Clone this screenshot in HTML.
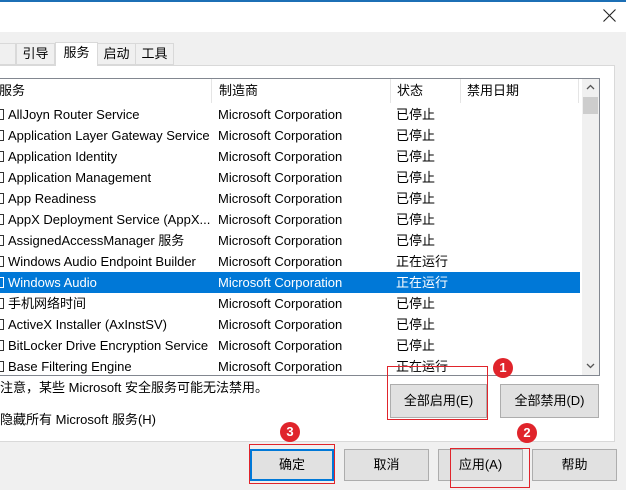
<!DOCTYPE html>
<html><head><meta charset="utf-8"><style>
*{margin:0;padding:0;box-sizing:border-box}
html,body{width:626px;height:490px;overflow:hidden}
body{background:#f0f0f0;position:relative;font-family:"Liberation Sans","Noto Sans CJK SC",sans-serif;font-size:13px;color:#000}
.a{position:absolute;white-space:nowrap}
.row{position:absolute;left:0;width:580px;height:21px;line-height:21px;white-space:nowrap}
.row span{position:absolute}
.cb{position:absolute;left:-6px;top:5px;width:10px;height:11px;border:1px solid #333}
.btn{position:absolute;background:#e1e1e1;border:1px solid #adadad;text-align:center;font-size:13px}
.red{position:absolute;border:1px solid #e0242b}
.num{position:absolute;width:20px;height:20px;border-radius:50%;background:#e0242b;color:#fff;font-weight:bold;font-size:13px;text-align:center;line-height:20px}
</style></head><body>
<div class="a" style="left:0;top:0;width:626px;height:2px;background:#1c6fb5"></div>
<div class="a" style="left:0;top:2px;width:626px;height:30px;background:#fff"></div>
<svg class="a" style="left:603px;top:9px" width="13" height="13"><path d="M0.5 0.5L12.5 12.5M12.5 0.5L0.5 12.5" stroke="#222" stroke-width="1.1"/></svg>
<!-- tabs -->
<div class="a" style="left:-4px;top:43px;width:20px;height:22px;border:1px solid #d9d9d9;background:#f0f0f0"></div>
<div class="a" style="left:16px;top:43px;width:39px;height:22px;border:1px solid #d9d9d9;background:#f0f0f0;line-height:20px;text-align:center">引导</div>
<div class="a" style="left:55px;top:42px;width:43px;height:24px;border:1px solid #d9d9d9;border-bottom:none;background:#fff;line-height:20px;text-align:center;z-index:2">服务</div>
<div class="a" style="left:97px;top:43px;width:39px;height:22px;border:1px solid #d9d9d9;background:#f0f0f0;line-height:20px;text-align:center">启动</div>
<div class="a" style="left:135px;top:43px;width:39px;height:22px;border:1px solid #d9d9d9;background:#f0f0f0;line-height:20px;text-align:center">工具</div>
<!-- panel -->
<div class="a" style="left:-2px;top:65px;width:617px;height:377px;background:#fff;border:1px solid #d9d9d9"></div>
<!-- listbox -->
<div class="a" style="left:-2px;top:78px;width:602px;height:298px;border:1px solid #828790;background:#fff;overflow:hidden">
 <div class="a" style="left:0;top:0;width:600px;height:24px;line-height:24px">
  <span class="a" style="left:0">服务</span>
  <div class="a" style="left:212px;top:0;width:1px;height:24px;background:#e5e5e5"></div>
  <span class="a" style="left:220px">制造商</span>
  <div class="a" style="left:391px;top:0;width:1px;height:24px;background:#e5e5e5"></div>
  <span class="a" style="left:398px">状态</span>
  <div class="a" style="left:461px;top:0;width:1px;height:24px;background:#e5e5e5"></div>
  <span class="a" style="left:468px">禁用日期</span>
  <div class="a" style="left:579px;top:0;width:1px;height:24px;background:#e5e5e5"></div>
 </div>
 <div class="a" style="left:583px;top:0;width:17px;height:296px;background:#f0f0f0"></div>
 <svg class="a" style="left:587px;top:5px" width="9" height="6"><path d="M1 5L4.5 1.5L8 5" stroke="#555" stroke-width="1.3" fill="none"/></svg>
 <div class="a" style="left:584px;top:18px;width:15px;height:17px;background:#cdcdcd"></div>
 <svg class="a" style="left:587px;top:284px" width="9" height="6"><path d="M1 1L4.5 4.5L8 1" stroke="#555" stroke-width="1.3" fill="none"/></svg>
</div>
<div id="rows"></div>
<div class="a" style="left:0;top:376px;height:24px;line-height:24px">注意，某些 Microsoft 安全服务可能无法禁用。</div>
<div class="a" style="left:0;top:408px;height:24px;line-height:24px">隐藏所有 Microsoft 服务(H)</div>
<div class="btn" style="left:390px;top:384px;width:97px;height:34px;line-height:32px">全部启用(E)</div>
<div class="btn" style="left:500px;top:384px;width:99px;height:34px;line-height:32px">全部禁用(D)</div>
<div class="btn" style="left:250px;top:449px;width:84px;height:32px;line-height:28px;border:2px solid #0078d7">确定</div>
<div class="btn" style="left:344px;top:449px;width:85px;height:32px;line-height:30px">取消</div>
<div class="btn" style="left:438px;top:449px;width:85px;height:32px;line-height:30px">应用(A)</div>
<div class="btn" style="left:532px;top:449px;width:85px;height:32px;line-height:30px">帮助</div>
<div class="red" style="left:387px;top:366px;width:101px;height:54px"></div>
<div class="red" style="left:249px;top:444px;width:86px;height:40px"></div>
<div class="red" style="left:450px;top:448px;width:80px;height:40px"></div>
<div class="num" style="left:493px;top:358px">1</div>
<div class="num" style="left:517px;top:423px">2</div>
<div class="num" style="left:280px;top:422px">3</div>
<script>
var d=[["AllJoyn Router Service","已停止"],["Application Layer Gateway Service","已停止"],["Application Identity","已停止"],["Application Management","已停止"],["App Readiness","已停止"],["AppX Deployment Service (AppX...","已停止"],["AssignedAccessManager 服务","已停止"],["Windows Audio Endpoint Builder","正在运行"],["Windows Audio","正在运行"],["手机网络时间","已停止"],["ActiveX Installer (AxInstSV)","已停止"],["BitLocker Drive Encryption Service","已停止"],["Base Filtering Engine","正在运行"]];
var h="";d.forEach(function(r,i){var s=i==8;var t=104+i*21;
h+='<div class="row" style="top:'+t+'px;'+(s?'background:#0078d7;color:#fff;':'')+(i==12?'clip-path:inset(0 0 '+(21-(375-t))+'px 0);':'')+'"><div class="cb" style="'+(s?'border-color:#fff':'')+'"></div><span style="left:8px">'+r[0]+'</span><span style="left:218px">Microsoft Corporation</span><span style="left:396px">'+r[1]+'</span></div>';});
document.getElementById("rows").innerHTML=h;
</script>
</body></html>
